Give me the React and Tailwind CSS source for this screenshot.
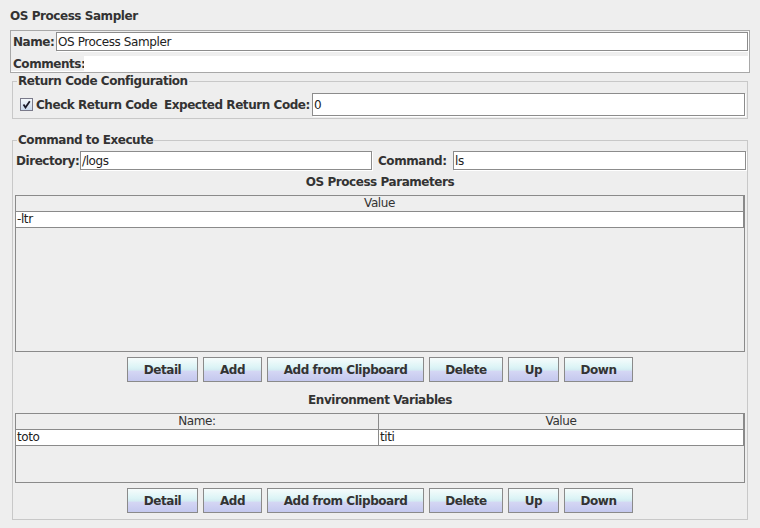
import React from 'react';

const btnClass =
  'shrink-0 h-[25px] border border-[#8a8a8a] bg-[linear-gradient(to_bottom,#f6fcfc_0%,#dcf4f6_40%,#d4ecf2_52%,#d4d6f4_58%,#c4c8ee_100%)] font-bold text-[12px] tracking-[-0.45px] text-[#333] leading-none whitespace-nowrap';

const buttons = [
  { label: 'Detail', w: 'w-[71px]' },
  { label: 'Add', w: 'w-[59px]' },
  { label: 'Add from Clipboard', w: 'w-[157px]' },
  { label: 'Delete', w: 'w-[74px]' },
  { label: 'Up', w: 'w-[51px]' },
  { label: 'Down', w: 'w-[69px]' },
];

const ButtonBar = () => (
  <div className="flex justify-center gap-[5px] mt-[5px]">
    {buttons.map((b) => (
      <button key={b.label} className={`${btnClass} ${b.w}`}>
        {b.label}
      </button>
    ))}
  </div>
);

const Field = ({ value, className = '' }) => (
  <div
    className={`shrink-0 bg-white border border-[#8c8c8c] shadow-[1px_1px_0_#ffffff] flex items-center pl-[1px] text-[12px] tracking-[-0.4px] text-[#222] whitespace-nowrap ${className}`}
  >
    {value}
  </div>
);

const Label = ({ children, className = '' }) => (
  <span className={`shrink-0 whitespace-nowrap font-bold tracking-[-0.45px] ${className}`}>{children}</span>
);

const Legend = ({ children }) => (
  <legend className="ml-[4px] px-[1px] font-bold text-[12px] tracking-[-0.45px] leading-[15px] text-[#333] whitespace-nowrap">
    {children}
  </legend>
);

const Checkbox = () => (
  <div className="shrink-0 w-[13px] h-[13px] border border-[#7a7a8a] bg-[linear-gradient(to_bottom,#f4f8fc,#c8d8ec)] flex items-center justify-center">
    <svg width="9" height="9" viewBox="0 0 9 9">
      <path d="M1.5 4.5 L3.5 7.5 L7.8 1.2" fill="none" stroke="#1a1a2a" strokeWidth="1.8" />
    </svg>
  </div>
);

export default function App() {
  return (
    <div className="w-[760px] h-[528px] bg-[#eeeeee] overflow-hidden font-['DejaVu_Sans',sans-serif] text-[12px] text-[#333]">
      <div className="h-[30px] pl-[10px] pt-[9px] font-bold tracking-[-0.45px] leading-[15px]">OS Process Sampler</div>

      <div className="ml-[10px] w-[740px] h-[43px] border border-[#a8a8a8] shadow-[inset_-1px_-1px_0_#ffffff] pl-[1px] pt-[1px]">
        <div className="flex items-center h-[19px]">
          <Label className="ml-[1px] w-[43px]">Name:</Label>
          <Field value="OS Process Sampler" className="w-[692px] h-[19px]" />
        </div>
        <div className="flex items-center mt-[5px] h-[16px]">
          <Label className="ml-[1px] w-[71px]">Comments:</Label>
          <div className="shrink-0 w-[665px] h-[16px] bg-white" />
        </div>
      </div>

      <fieldset className="ml-[12px] mt-[1px] w-[736px] border border-[#c8c8c8] pb-[2px]">
        <Legend>Return Code Configuration</Legend>
        <div className="flex items-center h-[23px] mt-[4px] pl-[7px]">
          <Checkbox />
          <Label className="ml-[3px] w-[128px]">Check Return Code</Label>
          <Label className="w-[148px]">Expected Return Code:</Label>
          <Field value="0" className="w-[433px] h-[23px]" />
        </div>
      </fieldset>

      <fieldset className="ml-[12px] mt-[14px] w-[736px] border border-[#c8c8c8] pb-[6px]">
        <Legend>Command to Execute</Legend>
        <div className="flex items-center h-[19px] mt-[3px] pl-[3px]">
          <Label className="w-[64px]">Directory:</Label>
          <Field value="/logs" className="w-[292px] h-[19px]" />
          <Label className="ml-[6px] w-[75px]">Command:</Label>
          <Field value="ls" className="w-[293px] h-[19px]" />
        </div>

        <div className="mt-[5px] h-[15px] leading-[15px] text-center font-bold tracking-[-0.45px]">OS Process Parameters</div>

        <div className="mt-[5px] ml-[2px] w-[730px] h-[157px] border border-[#8a8a8a]">
          <div className="h-[16px] border-b border-r border-[#8a8a8a] text-center leading-[15px] tracking-[-0.4px] text-[#333]">Value</div>
          <div className="h-[16px] bg-white border-b border-r border-[#8a8a8a] pl-[1px] leading-[15px] tracking-[-0.4px] text-[#222]">-ltr</div>
        </div>

        <ButtonBar />

        <div className="mt-[11px] h-[15px] leading-[15px] text-center font-bold tracking-[-0.45px]">Environment Variables</div>

        <div className="mt-[5px] ml-[2px] w-[730px] h-[70px] border border-[#8a8a8a]">
          <div className="flex h-[16px] border-b border-r border-[#8a8a8a] leading-[15px] tracking-[-0.4px] text-[#333]">
            <div className="w-[363px] border-r border-[#8a8a8a] text-center">Name:</div>
            <div className="flex-1 text-center">Value</div>
          </div>
          <div className="flex h-[16px] bg-white border-b border-r border-[#8a8a8a] leading-[15px] tracking-[-0.4px] text-[#222]">
            <div className="w-[363px] border-r border-[#8a8a8a] pl-[1px]">toto</div>
            <div className="flex-1 pl-[1px]">titi</div>
          </div>
        </div>

        <ButtonBar />
      </fieldset>
    </div>
  );
}
